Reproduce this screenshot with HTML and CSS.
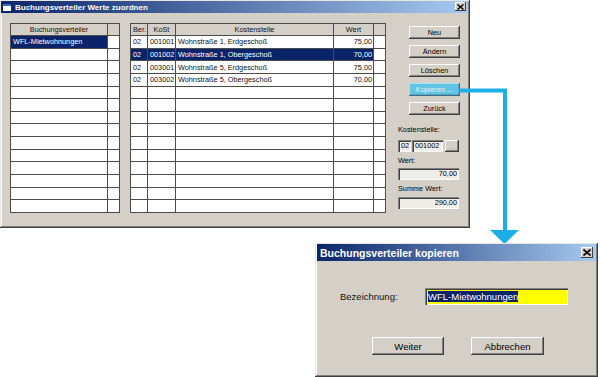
FILE: index.html
```html
<!DOCTYPE html>
<html lang="de">
<head>
    <meta charset="UTF-8">
    <title>Buchungsverteiler Werte zuordnen</title>
    <link rel="stylesheet" href="styles.css">
</head>
<body>

    <div class="win main-win">
        <div class="titlebar">
            <span class="app-icon"></span>
            <span class="title-text">Buchungsverteiler Werte zuordnen</span>
            <span class="close-btn">
                <svg width="7" height="6" viewBox="0 0 7 6"><path d="M0.5 0.5 L6.5 5.5 M6.5 0.5 L0.5 5.5" stroke="#000" stroke-width="1.4"/></svg>
            </span>
        </div>
        <div class="client">
            <table class="grid grid-left" id="leftGrid">
                <tr><th class="col-name">Buchungsverteiler</th><th class="col-pad"></th></tr>
            </table>
            <table class="grid grid-right" id="rightGrid">
                <tr>
                    <th class="col-ber">Ber.</th>
                    <th class="col-kost">KoSt</th>
                    <th class="col-text">Kostenstelle</th>
                    <th class="col-wert">Wert</th>
                    <th class="col-pad"></th>
                </tr>
            </table>
            <div class="side">
                <button class="btn">Neu</button>
                <button class="btn">Ändern</button>
                <button class="btn">Löschen</button>
                <button class="btn btn-hot">Kopieren ...</button>
                <button class="btn">Zurück</button>

                <div class="lbl lbl-first">Kostenstelle:</div>
                <div class="kst-row">
                    <div class="field field-ber">02</div>
                    <div class="field field-kost">001002</div>
                    <button class="btn btn-dots">...</button>
                </div>
                <div class="lbl">Wert:</div>
                <div class="field field-num">70,00</div>
                <div class="lbl">Summe Wert:</div>
                <div class="field field-num field-sum">290,00</div>
            </div>
        </div>
    </div>

    <svg class="arrow" width="64" height="160" viewBox="0 0 64 160">
        <path d="M0 2.5 H46 V142" fill="none" stroke="#1cafe6" stroke-width="4"/>
        <polygon points="31,142 60,142 45.5,156" fill="#1cafe6"/>
    </svg>

    <div class="win copy-win">
        <div class="titlebar titlebar-big">
            <span class="title-text">Buchungsverteiler kopieren</span>
            <span class="close-btn close-big">
                <svg width="8" height="7" viewBox="0 0 8 7"><path d="M0.5 0.5 L7.5 6.5 M7.5 0.5 L0.5 6.5" stroke="#000" stroke-width="1.6"/></svg>
            </span>
        </div>
        <div class="copy-body">
            <div class="copy-row">
                <span class="copy-label">Bezeichnung:</span>
                <div class="copy-input"><span class="selected">WFL-Mietwohnungen</span></div>
            </div>
            <div class="copy-buttons">
                <button class="btn btn-big">Weiter</button>
                <button class="btn btn-big">Abbrechen</button>
            </div>
        </div>
    </div>

<script>
    const ROWS = 14;

    let verteiler = ["WFL-Mietwohnungen"];
    let werte = [
        ["02", "001001", "Wohnstraße 1, Erdgeschoß", "75,00"],
        ["02", "001002", "Wohnstraße 1, Obergeschoß", "70,00"],
        ["02", "003001", "Wohnstraße 5, Erdgeschoß", "75,00"],
        ["02", "003002", "Wohnstraße 5, Obergeschoß", "70,00"]
    ];

    function fillLeft() {
        let table = document.getElementById("leftGrid");
        for (let i = 0; i < ROWS; i++) {
            let name = verteiler[i] || "";
            let cls = i === 0 ? "sel" : "";
            table.innerHTML += `<tr class="${cls}"><td class="data">${name}</td><td></td></tr>`;
        }
    }

    function fillRight() {
        let table = document.getElementById("rightGrid");
        for (let i = 0; i < ROWS; i++) {
            let row = werte[i] || ["", "", "", ""];
            let cls = i === 1 ? "sel" : "";
            table.innerHTML += `
                <tr class="${cls}">
                    <td class="data">${row[0]}</td>
                    <td class="data">${row[1]}</td>
                    <td class="data">${row[2]}</td>
                    <td class="data num">${row[3]}</td>
                    <td></td>
                </tr>`;
        }
    }

    fillLeft();
    fillRight();
</script>

</body>
</html>
```

FILE: styles.css
```css
body {
    margin: 0;
    background: #fff;
    font-family: "Liberation Sans", Arial, sans-serif;
    position: relative;
    width: 600px;
    height: 377px;
    overflow: hidden;
}
.win {
    background: #d4d0c8;
    box-sizing: border-box;
    padding: 1px 2px 2px 1px;
    box-shadow: inset -1px -1px #404040, inset 1px 1px #e8e6e0, inset -2px -2px #808080, inset 2px 2px #fff;
}
.main-win {
    width: 470px;
    height: 228px;
}
.titlebar {
    height: 12px;
    display: flex;
    align-items: center;
    background: linear-gradient(to right, #0a246a, #a6caf0);
    color: #fff;
    font-weight: bold;
    font-size: 8px;
    position: relative;
}
.app-icon {
    width: 8px;
    height: 7px;
    margin: 0 4px 0 2px;
    background: #fff;
    border-top: 2px solid #3a6ea5;
    box-sizing: border-box;
}
.close-btn {
    position: absolute;
    right: 2px;
    top: 1px;
    width: 11px;
    height: 9px;
    background: #d4d0c8;
    box-shadow: inset -1px -1px #404040, inset 1px 1px #fff;
    display: flex;
    align-items: center;
    justify-content: center;
}
.client {
    display: flex;
    align-items: flex-start;
    padding: 10px 0 0 9px;
}
.grid {
    border-collapse: collapse;
    table-layout: fixed;
    background: #fff;
    font-size: 7.3px;
    color: #111;
}
.grid th,
.grid td {
    border: 1px solid #4c4c4c;
    padding: 0 2px;
    height: 12.65px;
    white-space: nowrap;
    overflow: hidden;
    box-sizing: border-box;
}
.grid th {
    background: #d4d0c8;
    font-weight: normal;
    height: 12px;
}
.grid tr.sel td.data {
    background: #0a246a;
    color: #fff;
}
.grid td.num {
    text-align: right;
    padding-right: 1px;
}
.grid-left {
    width: 110px;
}
.grid-right {
    width: 255px;
    margin-left: 10px;
}
.col-name { width: 97px; }
.col-pad { width: 12px; }
.col-ber { width: 17px; }
.col-kost { width: 28px; }
.col-text { width: 158px; }
.col-wert { width: 40px; }
.side {
    display: flex;
    flex-direction: column;
    width: 62px;
    margin: 3px 0 0 12px;
    font-size: 7.3px;
}
.btn {
    width: 51px;
    height: 13px;
    margin: 0 0 6px 11px;
    padding: 0;
    border: none;
    background: #d4d0c8;
    font-family: "Liberation Sans", Arial, sans-serif;
    font-size: 7.3px;
    color: #000;
    box-shadow: inset -1px -1px #404040, inset 1px 1px #fff, inset -2px -2px #808080;
}
.btn-hot {
    background: #62c4e4;
    color: #e4f2f7;
    box-shadow: inset -1px -1px #3d6f80, inset 1px 1px #a9e2f3, inset -2px -2px #4da6c4;
}
.lbl {
    height: 10px;
    line-height: 10px;
    margin-top: 4px;
}
.lbl-first {
    margin-top: 4px;
}
.kst-row {
    display: flex;
    align-items: center;
    margin-top: 5px;
    gap: 1px;
}
.field {
    height: 12px;
    line-height: 12px;
    box-sizing: border-box;
    background: #eeede8;
    padding: 0 2px 0 3px;
    box-shadow: inset 1px 1px #808080, inset 2px 2px #404040, inset -1px -1px #fff;
    white-space: nowrap;
}
.field-ber {
    width: 13px;
}
.field-kost {
    width: 31px;
}
.btn-dots {
    width: 14px;
    height: 12px;
    margin: 0 0 0 1px;
    color: #808080;
}
.field-num {
    width: 61px;
    margin-top: 2px;
    text-align: right;
}
.field-sum {
    margin-top: 3px;
}
.arrow {
    position: absolute;
    left: 459px;
    top: 88px;
}
.copy-win {
    position: absolute;
    left: 315px;
    top: 243px;
    width: 283px;
    height: 134px;
    padding: 1px 2px 2px 2px;
}
.titlebar-big {
    height: 17px;
    font-size: 10.5px;
    padding-left: 3px;
}
.close-big {
    right: 3px;
    top: 3px;
    width: 12px;
    height: 11px;
}
.copy-body {
    padding: 27px 0 0 23px;
    font-size: 9.5px;
    color: #111;
}
.copy-row {
    display: flex;
    align-items: center;
}
.copy-label {
    width: 85px;
}
.copy-input {
    width: 143px;
    height: 17px;
    box-sizing: border-box;
    background: #ffff00;
    padding: 2px 0 0 3px;
    box-shadow: inset 1px 1px #808080, inset 2px 2px #404040, inset -1px -1px #fff;
    line-height: 13px;
}
.selected {
    background: #0a246a;
    color: #fff;
}
.copy-buttons {
    display: flex;
    gap: 27px;
    margin: 32px 0 0 32px;
}
.btn-big {
    width: 72px;
    height: 18px;
    margin: 0;
    font-size: 9.5px;
}
.btn-big + .btn-big {
    width: 73px;
}
```
